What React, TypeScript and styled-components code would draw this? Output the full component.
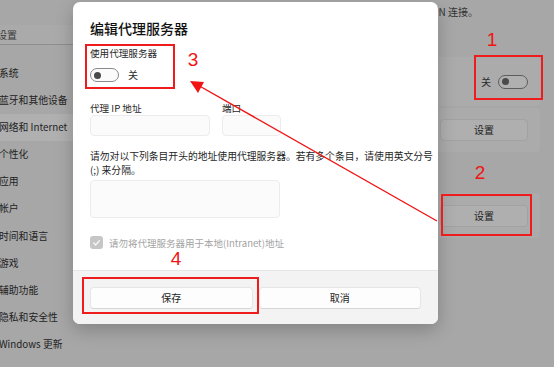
import styled, { createGlobalStyle } from "styled-components";

const GlobalStyle = createGlobalStyle`
  html, body {
    margin: 0;
    padding: 0;
    background: #a7a7a7;
  }
  body {
    font-family: "Noto Sans CJK SC", "Noto Sans", sans-serif;
    color: #262626;
  }
`;

const navItems = [
  "系统",
  "蓝牙和其他设备",
  "网络和 Internet",
  "个性化",
  "应用",
  "帐户",
  "时间和语言",
  "游戏",
  "辅助功能",
  "隐私和安全性",
  "Windows 更新",
];

const App = () => {
  return (
    <>
      <GlobalStyle />
      <Page>
        <Sidebar>
          <Search>设置</Search>
          <NavList>
            {navItems.map((item) => (
              <NavItem key={item} $active={item === "网络和 Internet"}>
                {item}
              </NavItem>
            ))}
          </NavList>
        </Sidebar>
        <Main>
          <Description>这些设置不适用于 VPN 连接。</Description>
          <Card $height={49} $gap={37}>
            <Label>关</Label>
            <BgToggle>
              <Knob />
            </BgToggle>
          </Card>
          <Card $height={44} $gap={2}>
            <BgButton>设置</BgButton>
          </Card>
          <Card $height={45} $gap={41}>
            <BgButton>设置</BgButton>
          </Card>
        </Main>

        <Dialog>
          <Body>
            <Title>编辑代理服务器</Title>
            <FieldLabel>使用代理服务器</FieldLabel>
            <ToggleRow>
              <Toggle>
                <Knob />
              </Toggle>
              <Label>关</Label>
            </ToggleRow>
            <Fields>
              <Field>
                <FieldLabel>代理 IP 地址</FieldLabel>
                <Input $width={118} />
              </Field>
              <Field>
                <FieldLabel>端口</FieldLabel>
                <Input $width={57} />
              </Field>
            </Fields>
            <Paragraph>
              请勿对以下列条目开头的地址使用代理服务器。若有多个条目，请使用英文分号
              <br />
              (;) 来分隔。
            </Paragraph>
            <TextArea />
            <CheckRow>
              <CheckBox>
                <svg width="9" height="9" viewBox="0 0 10 10">
                  <path d="M1.5 5.2 L4 7.6 L8.6 2.6" fill="none" stroke="#fff" strokeWidth="1.3" />
                </svg>
              </CheckBox>
              <CheckText>请勿将代理服务器用于本地(Intranet)地址</CheckText>
            </CheckRow>
          </Body>
          <Footer>
            <DialogButton>保存</DialogButton>
            <DialogButton>取消</DialogButton>
          </Footer>
        </Dialog>

        <Arrow width="554" height="367" viewBox="0 0 554 367">
          <line x1="437" y1="221" x2="196" y2="84" stroke="#f01414" strokeWidth="1.4" />
          <path d="M190 81 L204 82 L198 93 Z" fill="#f01414" />
        </Arrow>
        <Mark $x={474} $y={55} $w={69} $h={45} />
        <Mark $x={441} $y={194} $w={91} $h={42} />
        <Mark $x={85} $y={44} $w={90} $h={45} />
        <Mark $x={82} $y={277} $w={177} $h={37} />
        <Num $x={492} $y={40}>1</Num>
        <Num $x={480} $y={173}>2</Num>
        <Num $x={193} $y={60}>3</Num>
        <Num $x={176} $y={259}>4</Num>
      </Page>
    </>
  );
};

export default App;

const Page = styled.div`
  position: relative;
  width: 554px;
  height: 367px;
  overflow: hidden;
  display: flex;
  background: #a7a7a7;
`;

const Sidebar = styled.div`
  width: 92px;
  flex-shrink: 0;
  padding-top: 25px;
`;

const Search = styled.div`
  height: 19px;
  line-height: 19px;
  font-size: 10px;
  margin-left: -3px;
  background: #aaaaaa;
  border-bottom: 1px solid #8e8e8e;
  color: #3a3a3a;
`;

const NavList = styled.div`
  margin-top: 15px;
  display: flex;
  flex-direction: column;
`;

const NavItem = styled.div<{ $active?: boolean }>`
  height: 27.1px;
  line-height: 27px;
  font-size: 9.8px;
  margin-left: -1px;
  white-space: nowrap;
  background: ${(p) => (p.$active ? "#b0b0b0" : "transparent")};
  color: #222;
`;

const Main = styled.div`
  flex: 1;
  display: flex;
  flex-direction: column;
  padding: 4px 14px 0 0;
`;

const Description = styled.div`
  align-self: flex-end;
  margin-right: 62px;
  font-size: 10px;
  line-height: 16px;
  color: #333;
  white-space: nowrap;
`;

const Card = styled.div<{ $height: number; $gap: number }>`
  height: ${(p) => p.$height}px;
  margin-top: ${(p) => p.$gap}px;
  background: #ababab;
  border-radius: 4px;
  display: flex;
  align-items: center;
  justify-content: flex-end;
  gap: 7px;
  padding-right: 12px;
`;

const Label = styled.span`
  font-size: 10px;
  line-height: 14px;
  color: #2a2a2a;
`;

const BgToggle = styled.div`
  width: 25px;
  height: 12px;
  border: 1px solid #5d5d5d;
  border-radius: 8px;
  background: #b0b0b0;
  display: flex;
  align-items: center;
  padding-left: 3px;
  box-sizing: content-box;
`;

const Knob = styled.div`
  width: 7px;
  height: 7px;
  border-radius: 50%;
  background: #4a4a4a;
`;

const BgButton = styled.div`
  width: 86px;
  height: 20px;
  line-height: 20px;
  text-align: center;
  font-size: 10px;
  background: #afafaf;
  border: 1px solid #a2a2a2;
  border-radius: 4px;
  color: #222;
`;

const Dialog = styled.div`
  position: absolute;
  left: 73px;
  top: 2px;
  width: 365px;
  height: 322px;
  background: #ffffff;
  border-radius: 7px;
  box-shadow: 0 6px 18px rgba(0, 0, 0, 0.22);
  display: flex;
  flex-direction: column;
  overflow: hidden;
`;

const Body = styled.div`
  flex: 1;
  padding: 15px 17px 0 17px;
  display: flex;
  flex-direction: column;
`;

const Title = styled.div`
  font-size: 14px;
  font-weight: 500;
  line-height: 22px;
  color: #111;
  margin-bottom: 8px;
`;

const FieldLabel = styled.div`
  font-size: 9.6px;
  line-height: 13px;
  color: #1f1f1f;
  white-space: nowrap;
`;

const ToggleRow = styled.div`
  display: flex;
  align-items: center;
  height: 14px;
  gap: 9px;
  margin-top: 8px;
`;

const Toggle = styled.div`
  width: 24px;
  height: 12px;
  border: 1px solid #8a8a8a;
  border-radius: 8px;
  background: #fbfbfb;
  display: flex;
  align-items: center;
  padding-left: 3px;
  box-sizing: content-box;
`;

const Fields = styled.div`
  display: flex;
  gap: 12px;
  margin-top: 20px;
`;

const Field = styled.div`
  display: flex;
  flex-direction: column;
`;

const Input = styled.div<{ $width: number }>`
  width: ${(p) => p.$width}px;
  height: 19px;
  border: 1px solid #ececec;
  border-radius: 4px;
  background: #fbfbfb;
`;

const Paragraph = styled.div`
  margin-top: 13px;
  font-size: 9.8px;
  line-height: 14px;
  color: #1f1f1f;
  white-space: nowrap;
`;

const TextArea = styled.div`
  margin-top: 3px;
  width: 188px;
  height: 36px;
  border: 1px solid #ececec;
  border-radius: 4px;
  background: #fbfbfb;
`;

const CheckRow = styled.div`
  display: flex;
  align-items: center;
  height: 13px;
  gap: 6px;
  margin-top: 18px;
`;

const CheckBox = styled.div`
  width: 13px;
  height: 13px;
  border-radius: 3px;
  background: #c6c6c6;
  display: flex;
  align-items: center;
  justify-content: center;
`;

const CheckText = styled.span`
  font-size: 9.5px;
  color: #a3a3a3;
`;

const Footer = styled.div`
  height: 54px;
  box-sizing: border-box;
  background: #f3f3f3;
  border-top: 1px solid #e6e6e6;
  padding: 16px 17px 0 17px;
  display: grid;
  grid-template-columns: 1fr 1fr;
  gap: 6px;
  align-items: start;
`;

const DialogButton = styled.div`
  height: 20px;
  line-height: 20px;
  text-align: center;
  font-size: 10px;
  color: #1f1f1f;
  background: #fdfdfd;
  border: 1px solid #e6e6e6;
  border-bottom-color: #d6d6d6;
  border-radius: 4px;
`;

const Arrow = styled.svg`
  position: absolute;
  left: 0;
  top: 0;
  pointer-events: none;
`;

const Mark = styled.div<{ $x: number; $y: number; $w: number; $h: number }>`
  position: absolute;
  left: ${(p) => p.$x}px;
  top: ${(p) => p.$y}px;
  width: ${(p) => p.$w}px;
  height: ${(p) => p.$h}px;
  box-sizing: border-box;
  border: 2px solid #ee1c1c;
`;

const Num = styled.div<{ $x: number; $y: number }>`
  position: absolute;
  left: ${(p) => p.$x - 10}px;
  top: ${(p) => p.$y - 12}px;
  width: 20px;
  height: 24px;
  line-height: 24px;
  text-align: center;
  font-family: "Liberation Sans", Arial, sans-serif;
  font-size: 19px;
  color: #f01414;
`;
